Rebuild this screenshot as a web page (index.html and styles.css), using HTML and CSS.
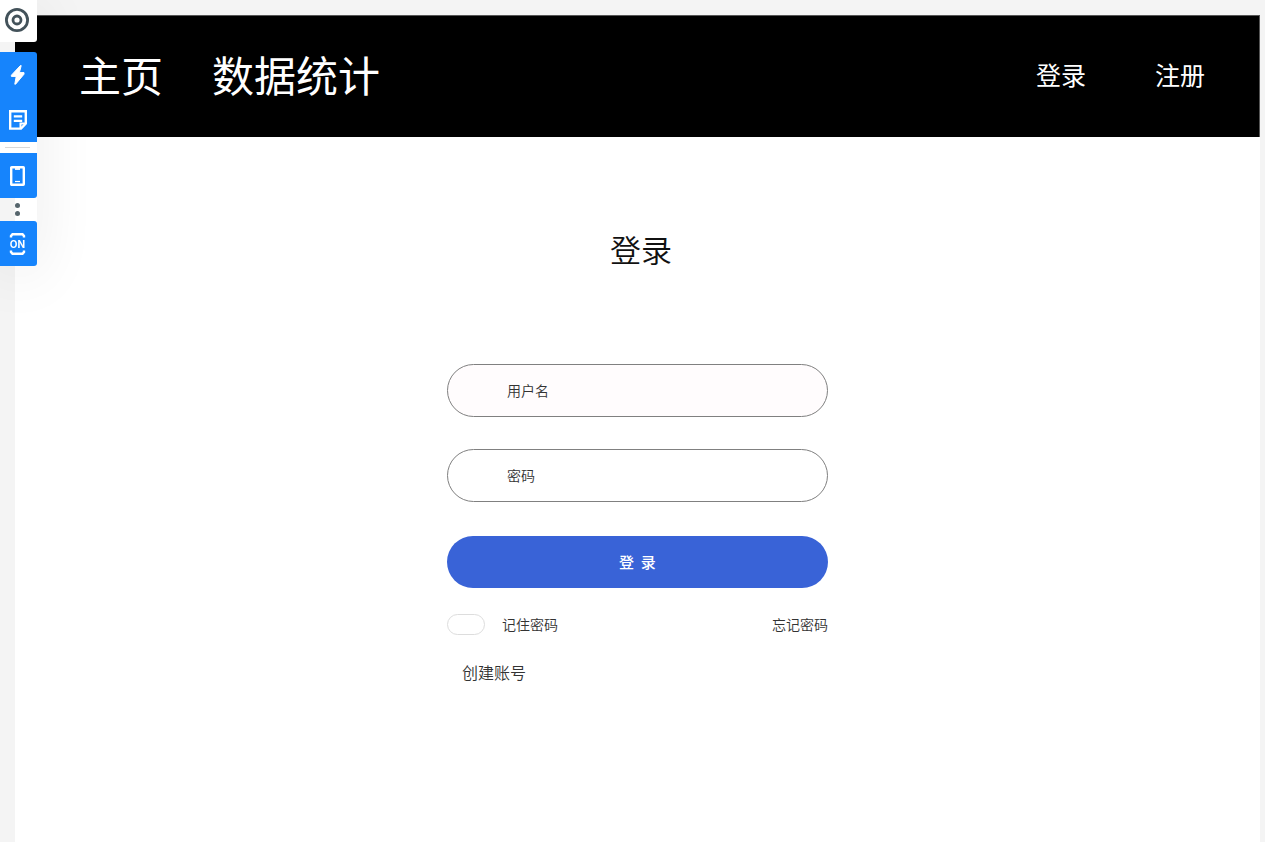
FILE: index.html
```html
<!DOCTYPE html>
<html lang="zh-CN">
<head>
<meta charset="utf-8">
<meta name="viewport" content="width=device-width, initial-scale=1">
<title>登录</title>
<link rel="stylesheet" href="styles.css">
</head>
<body>
<aside class="rail" aria-label="工具栏">
  <button class="rail-target" type="button" aria-label="定位">
    <svg width="26" height="26" viewBox="0 0 26 26" fill="none" stroke="#43525a"><circle cx="13" cy="13" r="10.6" stroke-width="2.8"/><circle cx="13" cy="13" r="4" stroke-width="2.8"/></svg>
  </button>
  <div class="rail-group">
    <button class="rail-button" type="button" aria-label="闪电">
      <svg width="20" height="22" viewBox="0 0 20 22" fill="#fff" stroke="#fff" stroke-linejoin="round"><path d="M12.4 1.6 3.4 11.2v1.2h4.8L6.8 20.2h.8L16 10.2V8.6h-4.6l1.8-7z" stroke-width="1"/></svg>
    </button>
    <button class="rail-button" type="button" aria-label="便签">
      <svg width="20" height="22" viewBox="0 0 20 22" fill="none" stroke="#fff"><path d="M2.2 2.2h15.6v12.3l-4.8 5.1H2.2z" stroke-width="2.4"/><path d="M12.5 20v-5.5H18" stroke-width="2"/><path d="M5.8 7.4h8.4M5.8 11.8h8.4" stroke-width="2.2"/></svg>
    </button>
  </div>
  <div class="rail-divider"></div>
  <button class="rail-button rail-phone" type="button" aria-label="手机">
    <svg width="17" height="22" viewBox="0 0 17 22" fill="none" stroke="#fff"><rect x="2.2" y="2.2" width="12.6" height="17.6" rx=".5" stroke-width="2.4"/><path d="M6 4h5" stroke-width="1.8"/><path d="M6 16.5h5" stroke-width="1.2"/></svg>
  </button>
  <div class="rail-dots"><span class="dot"></span><span class="dot"></span></div>
  <button class="rail-button rail-on" type="button">
    <svg width="17" height="24" viewBox="0 0 17 24" fill="none" stroke="#fff"><path d="M2 5.6V4L3.5 2.2h10L15 4v1.6M2 18.4V20l1.5 1.8h10L15 20v-1.6" stroke-width="2.4"/><text class="on-text" x="8.5" y="16" text-anchor="middle">ON</text></svg>
  </button>
</aside>
<div class="page">
  <header class="header">
    <nav class="nav nav-main">
      <a href="#">主页</a>
      <a href="#">数据统计</a>
    </nav>
    <nav class="nav nav-account">
      <a href="#">登录</a>
      <a href="#">注册</a>
    </nav>
  </header>
  <main class="main">
    <h1 class="title">登录</h1>
    <form class="form">
      <input class="field field-user" type="text" placeholder="用户名" aria-label="用户名">
      <input class="field" type="password" placeholder="密码" aria-label="密码">
      <button class="submit" type="button">登&nbsp;&nbsp;录</button>
      <div class="options">
        <label class="remember"><input class="toggle" type="checkbox">记住密码</label>
        <a href="#">忘记密码</a>
      </div>
      <a class="create" href="#">创建账号</a>
    </form>
  </main>
</div>
</body>
</html>
```
FILE: styles.css
```css
* { box-sizing: border-box; }
body {
  margin: 0;
  background: #f4f4f4;
  color: #333;
  font-family: "Noto Sans CJK SC", sans-serif;
}
a { color: inherit; text-decoration: none; }
button, input { font-family: inherit; }

.page {
  display: flex;
  flex-direction: column;
  min-height: 100vh;
  padding: 15px 5px 0 15px;
}
.header {
  display: flex;
  align-items: center;
  justify-content: space-between;
  padding: 28px 54px 33px 64px;
  background: #000;
  border: 1px solid #555;
  border-width: 1px 1px 0 0;
  color: #fff;
}
.nav { display: flex; }
.nav-main { gap: 49px; font-size: 42px; line-height: 60px; }
.nav-account { gap: 69px; font-size: 25px; line-height: 60px; }

.main {
  flex: 1;
  display: flex;
  flex-direction: column;
  align-items: center;
  padding: 88px 0 40px;
  background: #fff;
}
.title {
  margin: 0;
  padding-left: 7px;
  color: #111;
  font-size: 31px;
  font-weight: 350;
  line-height: 48px;
}
.form {
  display: flex;
  flex-direction: column;
  width: 100%;
  max-width: 381px;
  margin-top: 91px;
  font-size: 14px;
  font-weight: 350;
}
.field {
  width: 100%;
  height: 53px;
  margin-bottom: 32px;
  padding: 0 59px 2px;
  background: #fff;
  border: 1px solid #808080;
  border-radius: 27px;
  color: #333;
  font-size: 14px;
  font-weight: 350;
}
.field-user { background: #fffcfd; }
.field::placeholder { color: #333; opacity: 1; }
.submit {
  height: 52px;
  margin-top: 2px;
  padding: 0 0 1px;
  background: #3963d7;
  border: 0;
  border-radius: 26px;
  color: #fff;
  font-size: 15px;
  font-weight: 500;
}
.options {
  display: flex;
  align-items: center;
  justify-content: space-between;
  margin-top: 25px;
  line-height: 22px;
}
.remember { display: flex; align-items: center; gap: 17px; }
.toggle {
  appearance: none;
  width: 38px;
  height: 21px;
  margin: 0;
  background: #fff;
  border: 1px solid #ddd;
  border-radius: 11px;
}
.toggle:checked { background: #3963d7; }
.create {
  align-self: flex-start;
  margin: 25px 0 0 15px;
  font-size: 16px;
  line-height: 24px;
}

.rail {
  position: fixed;
  top: 0;
  left: 0;
  width: 37px;
  border-radius: 0 3px 3px 0;
  box-shadow: 0 8px 60px rgba(0, 0, 0, .09);
}
.rail button {
  display: flex;
  align-items: center;
  justify-content: center;
  width: 100%;
  padding: 0 2px 0 0;
  border: 0;
}
.rail .rail-target {
  height: 42px;
  margin-bottom: 10px;
  padding: 0 3px 3px 0;
  background: #fff;
  border-radius: 0 0 3px 0;
}
.rail .rail-button { height: 45px; background: #1684fc; }
.rail-group { border-radius: 0 3px 0 0; overflow: hidden; }
.rail-divider {
  height: 11px;
  padding: 5px 7px 5px 5px;
  background: #d8d8d8 content-box;
  box-shadow: inset 0 0 0 5px #fff;
}
.rail .rail-phone { border-radius: 0 0 3px 0; }
.rail-dots {
  display: flex;
  flex-direction: column;
  align-items: center;
  gap: 3px;
  padding: 5px 2px 5px 0;
}
.dot { width: 5px; height: 5px; background: #56656c; border-radius: 50%; }
.rail .rail-on { border-radius: 0 3px 3px 0; }
.on-text {
  fill: #fff;
  stroke: none;
  font-family: Inter, "Liberation Sans", sans-serif;
  font-size: 10px;
  font-weight: 700;
}
```
